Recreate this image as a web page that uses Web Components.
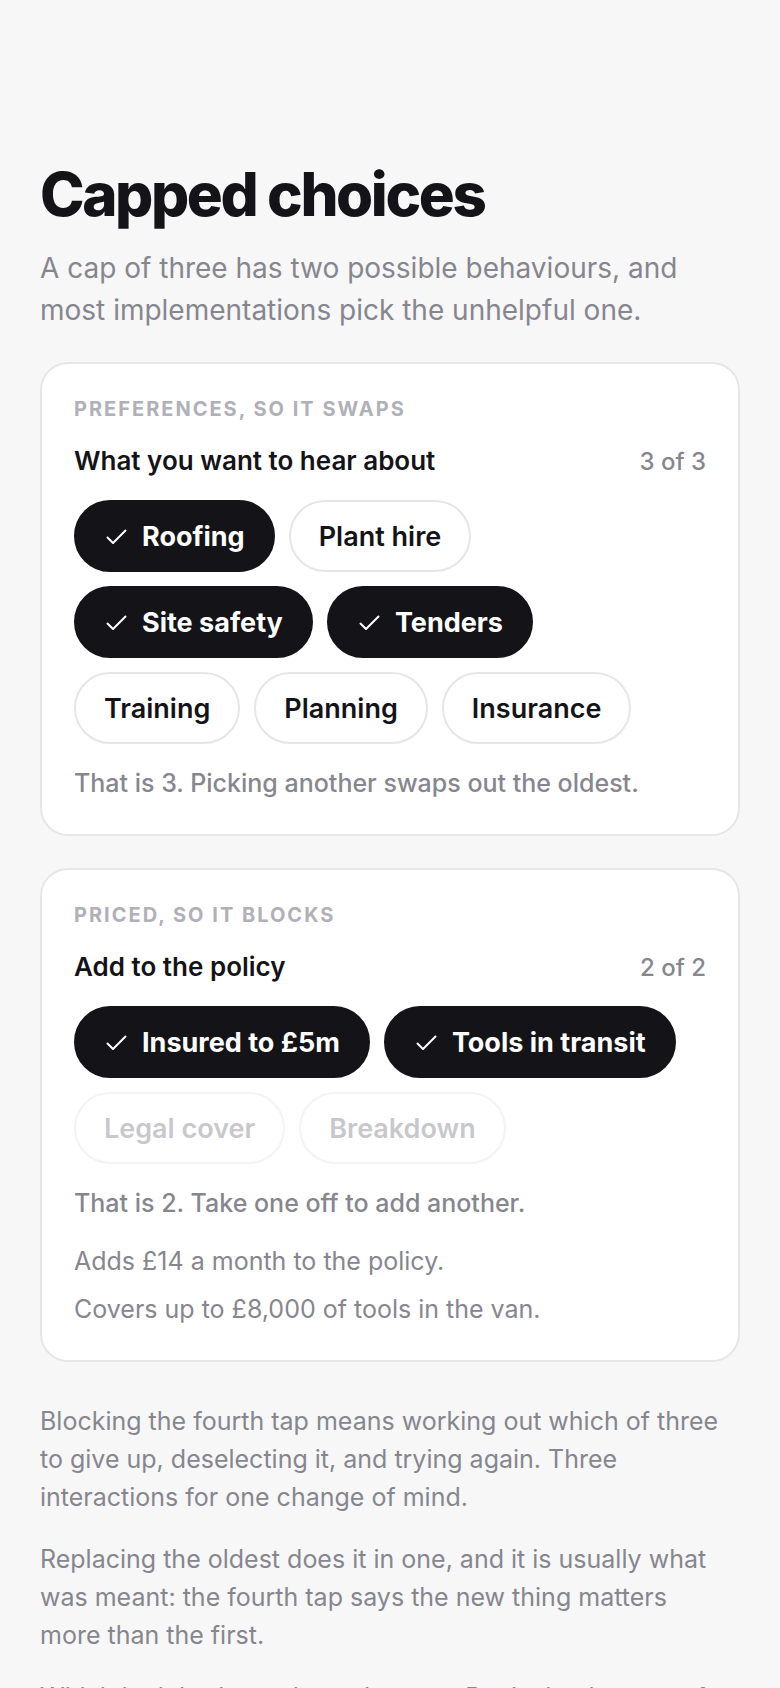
<!DOCTYPE html>
<html lang="en">
<head>
<meta charset="utf-8">
<meta name="viewport" content="width=device-width, initial-scale=1">
<title>Capped choices</title>
<style>
  :root {
    --color-page: #f7f7f7;
    --color-card: #ffffff;
    --color-line: #e6e6e8;
    --color-ink: #141418;
    --color-muted: #86868f;
    --color-faint: #b0b0b8;
  }
  body {
    margin: 0;
    background: var(--color-page);
    color: var(--color-ink);
    font-family: Inter, "Liberation Sans", sans-serif;
    height: 100vh;
    overflow: hidden;
  }
</style>
</head>
<body>
<choice-page>
  <span slot="title">Capped choices</span>
  <span slot="intro">A cap of three has two possible behaviours, and most implementations pick the unhelpful one.</span>

  <choice-card eyebrow="Preferences, so it swaps" heading="What you want to hear about" max="3" mode="swap">
    <choice-chip selected>Roofing</choice-chip>
    <choice-chip>Plant hire</choice-chip>
    <choice-chip selected>Site safety</choice-chip>
    <choice-chip selected>Tenders</choice-chip>
    <choice-chip>Training</choice-chip>
    <choice-chip>Planning</choice-chip>
    <choice-chip>Insurance</choice-chip>
  </choice-card>

  <choice-card eyebrow="Priced, so it blocks" heading="Add to the policy" max="2" mode="block">
    <choice-chip selected>Insured to £5m</choice-chip>
    <choice-chip selected>Tools in transit</choice-chip>
    <choice-chip>Legal cover</choice-chip>
    <choice-chip>Breakdown</choice-chip>
    <choice-note slot="notes">Adds £14 a month to the policy.</choice-note>
    <choice-note slot="notes">Covers up to £8,000 of tools in the van.</choice-note>
  </choice-card>

  <choice-prose slot="prose">Blocking the fourth tap means working out which of three to give up, deselecting it, and trying again. Three interactions for one change of mind.</choice-prose>
  <choice-prose slot="prose">Replacing the oldest does it in one, and it is usually what was meant: the fourth tap says the new thing matters more than the first.</choice-prose>
  <choice-prose slot="prose">Which is right depends on the cost. Replacing is wrong for anything priced.</choice-prose>
</choice-page>

<script>
const pageTemplate = /*html*/ `
<style>
  :host {
    display: block;
    padding: 158px 40px 40px;
  }
  h1 {
    margin: 0;
    font-size: 60px;
    line-height: 72px;
    font-weight: 800;
    letter-spacing: -0.04em;
  }
  .intro {
    margin: 17px 0 31px;
    font-size: 28px;
    line-height: 42px;
    color: var(--color-muted);
  }
  .cards {
    display: grid;
    gap: 32px;
  }
  .prose {
    display: grid;
    gap: 24px;
    margin-top: 40px;
    padding-right: 8px;
  }
</style>
<main>
  <h1><slot name="title"></slot></h1>
  <p class="intro"><slot name="intro"></slot></p>
  <div class="cards"><slot></slot></div>
  <div class="prose"><slot name="prose"></slot></div>
</main>
`

const cardTemplate = /*html*/ `
<style>
  :host {
    display: block;
    padding: 32px;
    border: 2px solid var(--color-line);
    border-radius: 28px;
    background: var(--color-card);
  }
  .eyebrow {
    margin: 0 0 18px;
    font-size: 20px;
    line-height: 26px;
    font-weight: 700;
    letter-spacing: 2px;
    text-transform: uppercase;
    color: var(--color-faint);
  }
  header {
    display: flex;
    align-items: baseline;
    justify-content: space-between;
    gap: 24px;
  }
  h2 {
    margin: 0;
    font-size: 26px;
    line-height: 42px;
    font-weight: 600;
  }
  output {
    font-size: 24px;
    font-weight: 500;
    color: var(--color-muted);
  }
  .chips {
    display: flex;
    flex-wrap: wrap;
    gap: 14px;
    margin: 18px 0 20px;
  }
  .status {
    margin: 0;
    font-size: 25px;
    line-height: 38px;
    font-weight: 500;
    color: var(--color-muted);
  }
  .notes {
    display: grid;
    gap: 10px;
  }
  .notes.filled {
    margin-top: 20px;
  }
</style>
<p class="eyebrow"></p>
<header>
  <h2 id="heading"></h2>
  <output></output>
</header>
<div class="chips" role="group" aria-labelledby="heading"><slot></slot></div>
<p class="status" aria-live="polite"></p>
<div class="notes"><slot name="notes"></slot></div>
`

const chipTemplate = /*html*/ `
<style>
  :host {
    display: block;
  }
  button {
    display: flex;
    align-items: center;
    gap: 12px;
    height: 72px;
    padding: 0 28px;
    border: 2px solid var(--color-line);
    border-radius: 36px;
    background: var(--color-card);
    color: var(--color-ink);
    font-family: inherit;
    font-size: 27px;
    font-weight: 600;
    cursor: pointer;
  }
  button[aria-pressed="true"] {
    border-color: var(--color-ink);
    background: var(--color-ink);
    color: #ffffff;
    font-weight: 700;
  }
  button:disabled {
    color: var(--color-muted);
    opacity: 0.45;
    cursor: default;
  }
  svg {
    display: none;
    width: 26px;
    height: 26px;
  }
  button[aria-pressed="true"] svg {
    display: block;
  }
</style>
<button type="button" aria-pressed="false">
  <svg viewBox="0 0 26 26" fill="none" stroke="currentColor" stroke-width="2" stroke-linecap="round" stroke-linejoin="round" aria-hidden="true">
    <path d="M3.500 14.500L9 20L21.500 7.500"/>
  </svg>
  <slot></slot>
</button>
`

const noteTemplate = /*html*/ `
<style>
  :host {
    display: block;
    font-size: 25px;
    line-height: 38px;
    color: var(--color-muted);
  }
  p {
    margin: 0;
  }
</style>
<p><slot></slot></p>
`

class ChoicePage extends HTMLElement {
  connectedCallback() {
    this.attachShadow({ mode: 'open' })
    this.shadowRoot.innerHTML = pageTemplate
  }
}

class ChoiceChip extends HTMLElement {
  static get observedAttributes() {
    return ['selected', 'disabled']
  }

  connectedCallback() {
    this.attachShadow({ mode: 'open' })
    this.shadowRoot.innerHTML = chipTemplate
    this.render()
  }

  attributeChangedCallback() {
    if (this.shadowRoot) {
      this.render()
    }
  }

  render() {
    const button = this.shadowRoot.querySelector('button')
    button.setAttribute('aria-pressed', String(this.hasAttribute('selected')))
    button.disabled = this.hasAttribute('disabled')
  }
}

class ChoiceCard extends HTMLElement {
  connectedCallback() {
    this.attachShadow({ mode: 'open' })
    this.shadowRoot.innerHTML = cardTemplate
    this.max = Number(this.getAttribute('max'))
    // oldest pick first
    this.picked = this.chips.filter(chip => chip.hasAttribute('selected'))
    this.chips.forEach(chip => {
      chip.addEventListener('click', () => this.toggle(chip))
    })
    this.render()
  }

  get chips() {
    return Array.from(this.querySelectorAll('choice-chip'))
  }

  get blocks() {
    return this.getAttribute('mode') === 'block'
  }

  toggle(chip) {
    if (chip.hasAttribute('disabled')) {
      return
    }
    if (this.picked.includes(chip)) {
      this.picked = this.picked.filter(other => other !== chip)
    } else {
      this.picked.push(chip)
      if (this.picked.length > this.max) {
        this.picked.shift()
      }
    }
    this.render()
  }

  statusText(full) {
    if (!full) {
      return `Pick up to ${this.max}.`
    }
    return this.blocks
      ? `That is ${this.max}. Take one off to add another.`
      : `That is ${this.max}. Picking another swaps out the oldest.`
  }

  render() {
    const root = this.shadowRoot
    const full = this.picked.length >= this.max
    this.chips.forEach(chip => {
      const on = this.picked.includes(chip)
      chip.toggleAttribute('selected', on)
      chip.toggleAttribute('disabled', this.blocks && full && !on)
    })
    root.querySelector('.eyebrow').textContent = this.getAttribute('eyebrow')
    root.querySelector('h2').textContent = this.getAttribute('heading')
    root.querySelector('output').textContent = `${this.picked.length} of ${this.max}`
    root.querySelector('.status').textContent = this.statusText(full)
    root.querySelector('.notes').classList.toggle('filled', this.querySelector('[slot="notes"]') !== null)
  }
}

class ChoiceNote extends HTMLElement {
  connectedCallback() {
    this.attachShadow({ mode: 'open' })
    this.shadowRoot.innerHTML = noteTemplate
  }
}

class ChoiceProse extends ChoiceNote {}

customElements.define('choice-page', ChoicePage)
customElements.define('choice-chip', ChoiceChip)
customElements.define('choice-card', ChoiceCard)
customElements.define('choice-note', ChoiceNote)
customElements.define('choice-prose', ChoiceProse)
</script>
</body>
</html>
